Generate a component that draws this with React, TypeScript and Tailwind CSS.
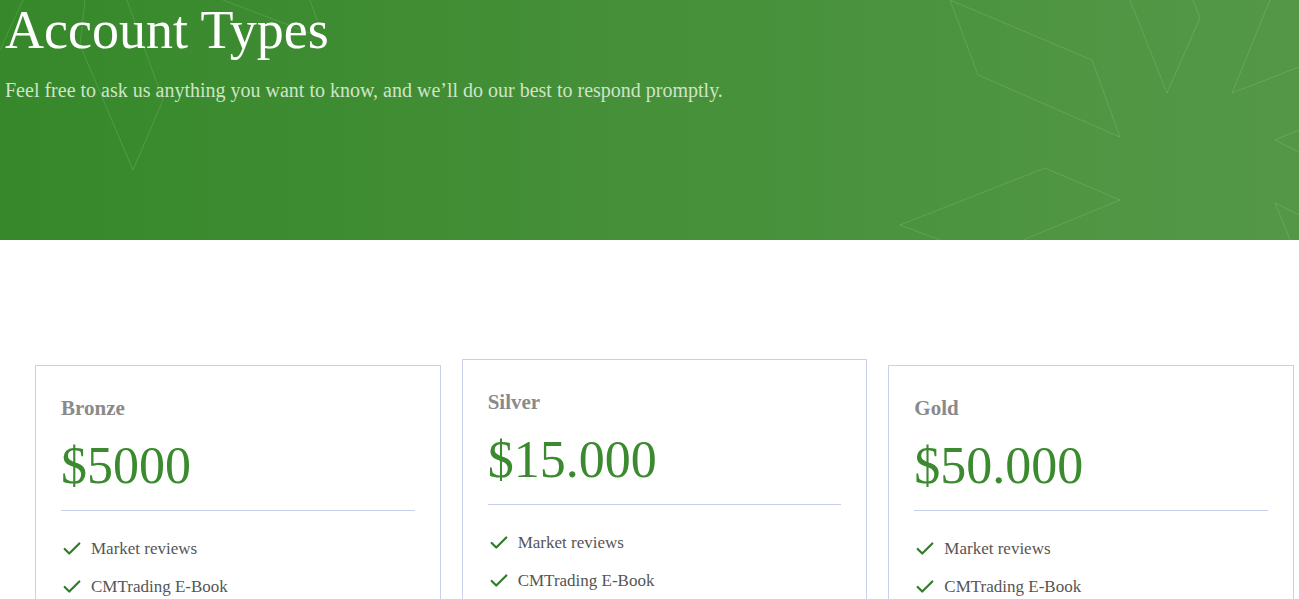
import { Check } from "lucide-react";

const PLANS = [
  { name: "Bronze", price: "$5000", raised: false },
  { name: "Silver", price: "$15.000", raised: true },
  { name: "Gold", price: "$50.000", raised: false },
];

const FEATURES = ["Market reviews", "CMTrading E-Book"];

function HeaderLines() {
  return (
    <svg
      className="absolute inset-0 h-full w-full"
      viewBox="0 0 1299 240"
      preserveAspectRatio="none"
      fill="none"
      stroke="rgba(255,255,255,0.13)"
      strokeWidth="1"
    >
      <polyline points="23,0 0,50" />
      <polyline points="85,0 80,45 133,170 163,100 127,0" />
      <polyline points="223,0 317,36" />
      <polyline points="310,0 317,20" />
      <polygon points="950,0 1092,60 1120,137 978,75" />
      <polyline points="1130,0 1167,93 1200,18 1193,0" />
      <polyline points="1270,0 1232,93 1299,67" />
      <polyline points="900,225 1045,168 1120,200 1023,240" />
      <polyline points="900,225 940,240" />
      <polyline points="1299,130 1275,140 1299,152" />
      <polyline points="1299,215 1275,203 1290,240" />
    </svg>
  );
}

function PlanCard({ name, price, raised }: { name: string; price: string; raised: boolean }) {
  return (
    <div
      className={`border border-[#c9d1ea] bg-white px-[25px] pt-[26px] pb-[60px] ${
        raised ? "-translate-y-[6px]" : ""
      }`}
    >
      <h3 className="text-[21px] font-bold leading-[32px] text-[#8a8a8a]">{name}</h3>
      <div className="mt-[12px] text-[52px] leading-[60px] text-[#3b8a2f]">{price}</div>
      <div className="mt-[14px] h-px bg-[#c9d1ea]" />
      <ul className="mt-[26px] flex flex-col gap-[14px]">
        {FEATURES.map((f) => (
          <li key={f} className="flex items-center gap-[8px] text-[17px] leading-[24px] text-[#555]">
            <Check className="size-[22px] text-[#2f7d2a]" strokeWidth={2.4} />
            {f}
          </li>
        ))}
      </ul>
    </div>
  );
}

export default function App() {
  return (
    <div className="min-h-screen bg-white font-['Liberation_Serif',serif]">
      <section className="relative h-[240px] overflow-hidden bg-gradient-to-r from-[#36882a] to-[#549847]">
        <HeaderLines />
        <div className="relative px-[5px]">
          <h1 className="-mt-[4px] text-[54px] leading-[68px] text-white">Account Types</h1>
          <p className="mt-[13px] text-[20px] leading-[26px] text-[#cfe4c9]">
            Feel free to ask us anything you want to know, and we’ll do our best to respond promptly.
          </p>
        </div>
      </section>
      <section className="grid grid-cols-3 items-start gap-[21px] pt-[125px] pl-[35px] pr-[5px]">
        {PLANS.map((p) => (
          <PlanCard key={p.name} {...p} />
        ))}
      </section>
    </div>
  );
}
